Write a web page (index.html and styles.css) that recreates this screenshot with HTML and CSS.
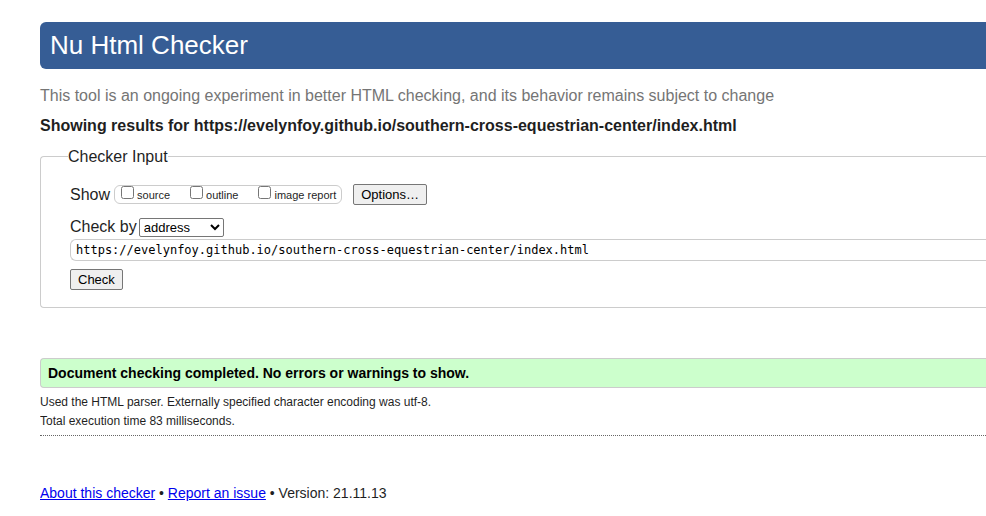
FILE: index.html
```html
<!DOCTYPE html>
<html lang="en">
<head>
<meta charset="utf-8">
<title>Nu Html Checker</title>
<link rel="stylesheet" href="styles.css">
</head>
<body>
<header class="banner"><h1>Nu Html Checker</h1></header>
<main>
  <p class="intro">This tool is an ongoing experiment in better HTML checking, and its behavior remains subject to change</p>
  <h2>Showing results for https://evelynfoy.github.io/southern-cross-equestrian-center/index.html</h2>
  <form>
    <fieldset class="checker">
      <legend>Checker Input</legend>
      <div class="row">
        <span>Show</span>
        <div class="options">
          <label><input type="checkbox"><span>source</span></label>
          <label><input type="checkbox"><span>outline</span></label>
          <label><input type="checkbox"><span>image report</span></label>
        </div>
        <button class="button" type="button">Options…</button>
      </div>
      <div class="row method">
        <label for="method">Check by</label>
        <select id="method"><option>address</option><option>file upload</option><option>text input</option></select>
      </div>
      <input class="address" type="url" aria-label="Address" value="https://evelynfoy.github.io/southern-cross-equestrian-center/index.html">
      <button class="button" type="submit">Check</button>
    </fieldset>
  </form>
  <p class="success">Document checking completed. No errors or warnings to show.</p>
  <div class="details">
    <p>Used the HTML parser. Externally specified character encoding was utf-8.</p>
    <p>Total execution time 83 milliseconds.</p>
  </div>
</main>
<footer><a href="#about">About this checker</a> • <a href="#issue">Report an issue</a> • Version: 21.11.13</footer>
</body>
</html>
```
FILE: styles.css
```css
* {
  box-sizing: border-box;
}

body {
  margin: 22px 0 0 40px;
  background: #fff;
  color: #1f1f1f;
  font: 16px/20px "Liberation Sans", Arial, sans-serif;
}

h1,
h2,
p {
  margin: 0;
}

.banner {
  padding: 8px 10px 9px;
  border-radius: 6px 0 0 6px;
  background: #365d95;
  color: #fff;
}

h1 {
  font-size: 26px;
  font-weight: normal;
  line-height: 30px;
}

.intro {
  margin-top: 17px;
  color: #757575;
}

h2 {
  margin-top: 10px;
  font-size: 16px;
}

.checker {
  min-width: 0;
  margin: 11px 0 0;
  padding: 18px 0 17px 29px;
  border: 1px solid #ccc;
  border-right: 0;
  border-radius: 4px 0 0 4px;
}

legend {
  margin-left: -2px;
  padding: 0;
  line-height: 19px;
}

.row {
  display: flex;
  align-items: center;
}

.options {
  display: flex;
  gap: 20px;
  height: 19px;
  margin: 0 11px 0 4px;
  padding: 0 5px 0 6px;
  border: 1px solid #ccc;
  border-radius: 6px;
  font-size: 11px;
  line-height: 19px;
}

.options label {
  display: flex;
  gap: 3px;
}

.options input {
  width: 13px;
  height: 13px;
  margin: 0;
}

.button {
  display: block;
  height: 21px;
  padding: 0 7px;
  border: 1px solid #767676;
  border-radius: 2px;
  background: #efefef;
  color: #000;
  font: 13px/18px "Liberation Sans", Arial, sans-serif;
}

.method {
  gap: 2px;
  margin-top: 12px;
}

select {
  width: 85px;
  height: 19px;
  padding: 0;
  border: 1px solid #767676;
  border-radius: 2px;
  background: #fff;
  color: #000;
  font: 13px/17px "Liberation Sans", Arial, sans-serif;
}

.address {
  display: block;
  width: 100%;
  height: 22px;
  margin: 2px 0 8px;
  padding: 0 5px;
  border: 1px solid #ccc;
  border-right: 0;
  border-radius: 6px 0 0 6px;
  color: #000;
  font: 12px "DejaVu Sans Mono", monospace;
}

.success {
  margin-top: 50px;
  padding: 4px 7px;
  border: 1px solid #ccc;
  border-right: 0;
  border-radius: 4px 0 0 4px;
  background: #cfc;
  color: #000;
  font-size: 14px;
  font-weight: bold;
}

.details {
  padding: 5px 0 4px;
  border-bottom: 1px dotted #666;
  font-size: 12px;
  line-height: 19px;
}

footer {
  margin-top: 47px;
  font-size: 14px;
}

a {
  color: #00e;
}
```
